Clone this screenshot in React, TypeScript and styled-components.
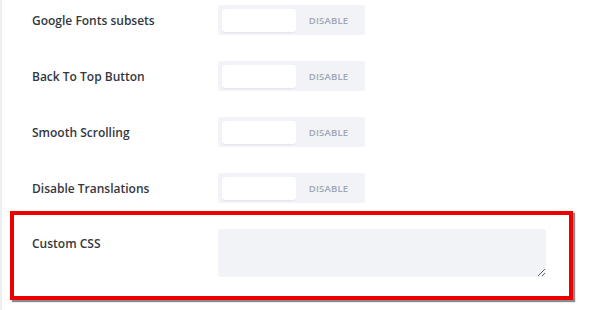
import React from 'react';
import styled, { createGlobalStyle } from 'styled-components';

const GlobalStyle = createGlobalStyle`
  html, body {
    margin: 0;
    padding: 0;
    background: #ffffff;
  }
  body {
    font-family: 'Open Sans', 'Noto Sans', sans-serif;
  }
`;

const Page = styled.div`
  min-height: 310px;
  box-sizing: border-box;
  border-left: 2px solid #eeeeee;
  padding-top: 5px;
  display: flex;
  flex-direction: column;
`;

const Row = styled.div`
  display: flex;
  align-items: center;
  height: 30px;
  padding-left: 30px;
  margin-bottom: 26px;
`;

const Label = styled.div`
  width: 186px;
  flex-shrink: 0;
  font-size: 12px;
  font-weight: 600;
  color: #333840;
`;

const Toggle = styled.div`
  width: 147px;
  height: 30px;
  box-sizing: border-box;
  padding: 4px;
  background: #f1f3f7;
  border-radius: 3px;
  display: flex;
  align-items: center;
`;

const Knob = styled.div`
  width: 74px;
  height: 23px;
  background: #ffffff;
  border-radius: 3px;
  box-shadow: 0 1px 1px rgba(0, 0, 0, 0.06);
`;

const ToggleText = styled.span`
  flex: 1;
  text-align: center;
  font-size: 9.5px;
  font-weight: 600;
  letter-spacing: 0.2px;
  color: #a0a7b4;
  text-transform: uppercase;
`;

const Highlight = styled.div`
  margin-left: 8px;
  margin-top: -18px;
  width: 563px;
  height: 89px;
  box-sizing: border-box;
  border: 4px solid #ee0000;
  box-shadow: 2px 2px 1px rgba(60, 60, 60, 0.6);
  padding: 14px 0 0 18px;
  display: flex;
  align-items: flex-start;
`;

const TopLabel = styled(Label)`
  padding-top: 6px;
`;

const TextArea = styled.textarea`
  width: 328px;
  height: 48px;
  box-sizing: border-box;
  background: #f1f3f7;
  border: none;
  border-radius: 3px;
  outline: none;
  resize: vertical;
  margin: 0;
  font-family: inherit;
`;

const toggles = [
  'Google Fonts subsets',
  'Back To Top Button',
  'Smooth Scrolling',
  'Disable Translations',
];

export default function App() {
  return (
    <>
      <GlobalStyle />
      <Page>
        {toggles.map(label => (
          <Row key={label}>
            <Label>{label}</Label>
            <Toggle>
              <Knob />
              <ToggleText>Disable</ToggleText>
            </Toggle>
          </Row>
        ))}
        <Highlight>
          <TopLabel>Custom CSS</TopLabel>
          <TextArea />
        </Highlight>
      </Page>
    </>
  );
}
